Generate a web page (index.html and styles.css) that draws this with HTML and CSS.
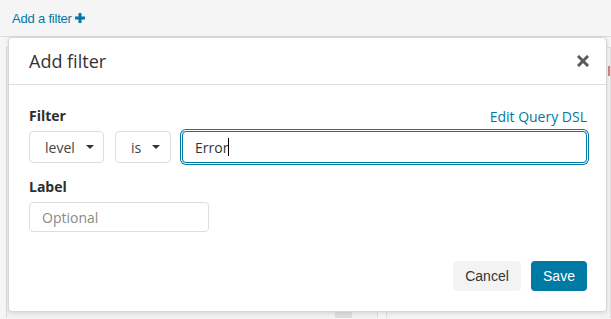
FILE: index.html
```html
<!DOCTYPE html>
<html lang="en">
<head>
    <meta charset="UTF-8">
    <meta name="viewport" content="width=device-width, initial-scale=1.0">
    <title>Add filter</title>
    <link rel="stylesheet" href="styles.css">
</head>
<body>
    <div class="filter-bar">
        <a class="add-filter" href="#">Add a filter
            <svg class="plus" width="10" height="10" viewBox="0 0 10 10">
                <path d="M5 0 V10 M0 5 H10" stroke="#0079a5" stroke-width="3"/>
            </svg>
        </a>
    </div>

    <div class="workspace">
        <div class="panel panel-left">
            <div class="scroll-thumb"></div>
        </div>
        <div class="panel panel-right">
            <div class="peek"></div>
        </div>
    </div>

    <div class="popover">
        <div class="popover-header">
            <h2 class="popover-title">Add filter</h2>
            <span class="close">
                <svg width="12" height="12" viewBox="0 0 12 12">
                    <path d="M2 2 L10 10 M10 2 L2 10" stroke="#5b5b5b" stroke-width="3" stroke-linecap="square"/>
                </svg>
            </span>
        </div>

        <div class="popover-body">
            <div class="field-head">
                <label class="field-label">Filter</label>
                <a class="dsl-link" href="#">Edit Query DSL</a>
            </div>
            <div class="filter-row">
                <div class="select select-field">level <span class="caret"></span></div>
                <div class="select select-op">is <span class="caret"></span></div>
                <div class="value-input focused">Error<span class="cursor"></span></div>
            </div>

            <label class="field-label label-gap">Label</label>
            <input class="text-input" type="text" placeholder="Optional">
        </div>

        <div class="popover-footer">
            <button class="btn btn-cancel">Cancel</button>
            <button class="btn btn-save">Save</button>
        </div>
    </div>
</body>
</html>
```

FILE: styles.css
```css
body {
    margin: 0;
    padding: 0;
    background-color: #f5f5f5;
    font-family: 'Open Sans', sans-serif;
    width: 611px;
    height: 319px;
    overflow: hidden;
    position: relative;
}

.filter-bar {
    height: 37px;
    border-bottom: 1px solid #dddddd;
    padding-left: 12px;
    display: flex;
    align-items: center;
    box-sizing: border-box;
}

.add-filter {
    font-family: 'Liberation Sans', Arial, sans-serif;
    font-size: 13px;
    color: #0079a5;
    text-decoration: none;
    letter-spacing: -0.2px;
    display: flex;
    align-items: center;
    gap: 3px;
}

.plus {
    display: block;
}

.workspace {
    display: flex;
    padding-top: 10px;
    height: 281px;
    box-sizing: border-box;
}

.panel {
    border: 1px solid #dddddd;
    border-bottom: none;
    background-color: #f0f0f0;
    position: relative;
}

.panel-left {
    margin-left: 6px;
    width: 370px;
}

.panel-right {
    margin-left: 8px;
    flex: 1;
    background-color: #f3f3f3;
}

.scroll-thumb {
    position: absolute;
    left: 328px;
    bottom: 0;
    width: 17px;
    height: 7px;
    background-color: #dddddd;
}

.peek {
    position: absolute;
    right: 0;
    top: 18px;
    width: 2px;
    height: 10px;
    background-color: #c8553d;
    opacity: 0.7;
}

.popover {
    position: absolute;
    left: 8px;
    top: 37px;
    width: 599px;
    height: 275px;
    background-color: #fff;
    border: 1px solid #d6d6d6;
    border-radius: 4px;
    box-shadow: 0 1px 4px rgba(0, 0, 0, 0.12);
    box-sizing: border-box;
    display: flex;
    flex-direction: column;
}

.popover-header {
    height: 47px;
    border-bottom: 1px solid #dddddd;
    display: flex;
    align-items: center;
    justify-content: space-between;
    padding: 0 17px 0 20px;
    box-sizing: border-box;
}

.popover-title {
    margin: 0;
    font-size: 18px;
    font-weight: 400;
    color: #333;
}

.close {
    display: flex;
}

.popover-body {
    padding: 21px 19px 0 20px;
}

.field-head {
    display: flex;
    justify-content: space-between;
    align-items: center;
    height: 20px;
}

.field-label {
    display: block;
    font-size: 14px;
    font-weight: 700;
    color: #2d2d2d;
    line-height: 20px;
}

.dsl-link {
    font-size: 14px;
    color: #0079a5;
    text-decoration: none;
}

.filter-row {
    display: flex;
    gap: 11px;
    margin-top: 5px;
    height: 32px;
}

.select {
    border: 1px solid #dddddd;
    border-radius: 4px;
    font-size: 14px;
    color: #444;
    display: flex;
    align-items: center;
    box-sizing: border-box;
    height: 32px;
}

.select-field {
    width: 75px;
    padding-left: 15px;
}

.select-op {
    width: 56px;
    padding-left: 15px;
}

.caret {
    width: 0;
    height: 0;
    border-left: 4px solid transparent;
    border-right: 4px solid transparent;
    border-top: 4px solid #333;
    margin-left: 11px;
}

.value-input {
    flex: 1;
    height: 32px;
    border: 1px solid #0079a5;
    border-radius: 4px;
    box-shadow: 0 0 0 1px #fff, 0 0 0 2px #0079a5;
    font-size: 14px;
    color: #333;
    padding-left: 12px;
    display: flex;
    align-items: center;
    box-sizing: border-box;
}

.cursor {
    width: 1px;
    height: 18px;
    background-color: #000;
}

.label-gap {
    margin-top: 14px;
}

.text-input {
    display: block;
    margin-top: 5px;
    width: 180px;
    height: 30px;
    border: 1px solid #dddddd;
    border-radius: 4px;
    padding: 0 12px;
    box-sizing: border-box;
    font-family: 'Open Sans', sans-serif;
    font-size: 14px;
    color: #333;
}

.text-input::placeholder {
    color: #8a8a8a;
}

.popover-footer {
    margin-top: auto;
    display: flex;
    justify-content: flex-end;
    gap: 10px;
    padding: 0 19px 20px 0;
}

.btn {
    font-family: 'Liberation Sans', Arial, sans-serif;
    font-size: 14px;
    height: 30px;
    border: none;
    border-radius: 4px;
    padding: 0 12px;
    cursor: pointer;
}

.btn-cancel {
    background-color: #f3f3f3;
    color: #333;
    width: 68px;
}

.btn-save {
    background-color: #0079a5;
    color: #fff;
    width: 56px;
}
```
